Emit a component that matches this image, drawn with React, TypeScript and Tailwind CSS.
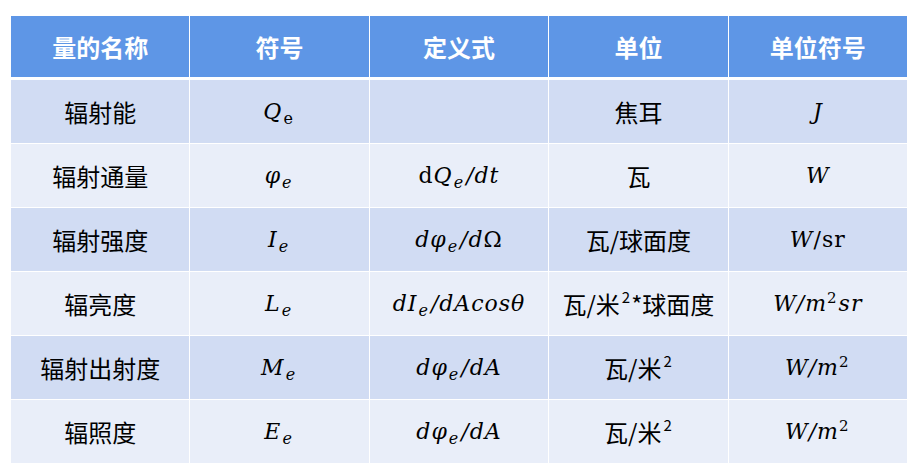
import React from "react";

const cjk = { fontFamily: '"Noto Sans CJK SC", sans-serif' };
const math = { fontFamily: '"DejaVu Serif", "Liberation Serif", serif' };

function I({ children }: { children: React.ReactNode }) {
  return <span className="italic">{children}</span>;
}

function Sub({ children, upright }: { children: React.ReactNode; upright?: boolean }) {
  return (
    <sub className={`text-[16px] ${upright ? "not-italic" : "italic"} bottom-[-5px] ml-[1px] mr-[2px]`}>
      {children}
    </sub>
  );
}

// superscript after a CJK character
function Sup({ children }: { children: React.ReactNode }) {
  return <sup className="text-[15px] not-italic top-[-11px] ml-[2px] mr-[1px]">{children}</sup>;
}

// superscript inside a formula
function MSup({ children }: { children: React.ReactNode }) {
  return <sup className="text-[15px] not-italic top-[-8px] mr-[1px]">{children}</sup>;
}

function M({ children }: { children: React.ReactNode }) {
  return (
    <span className="text-[22px] tracking-[1px] text-black" style={math}>
      {children}
    </span>
  );
}

function C({ children }: { children: React.ReactNode }) {
  return (
    <span className="text-[24px] text-black" style={cjk}>
      {children}
    </span>
  );
}

const headers = ["量的名称", "符号", "定义式", "单位", "单位符号"];

const rows: React.ReactNode[][] = [
  [
    <C>辐射能</C>,
    <M>
      <I>Q</I>
      <Sub upright>e</Sub>
    </M>,
    null,
    <C>焦耳</C>,
    <M>
      <I>J</I>
    </M>,
  ],
  [
    <C>辐射通量</C>,
    <M>
      <I>φ</I>
      <Sub>e</Sub>
    </M>,
    <M>
      d<I>Q</I>
      <Sub>e</Sub>
      <I>/dt</I>
    </M>,
    <C>瓦</C>,
    <M>
      <I>W</I>
    </M>,
  ],
  [
    <C>辐射强度</C>,
    <M>
      <I>I</I>
      <Sub>e</Sub>
    </M>,
    <M>
      <I>dφ</I>
      <Sub>e</Sub>
      <I>/d</I>Ω
    </M>,
    <C>瓦/球面度</C>,
    <M>
      <I>W</I>/sr
    </M>,
  ],
  [
    <C>辐亮度</C>,
    <M>
      <I>L</I>
      <Sub>e</Sub>
    </M>,
    <M>
      <I>dI</I>
      <Sub>e</Sub>
      <I>/dAcosθ</I>
    </M>,
    <C>
      瓦/米<Sup>2</Sup>*球面度
    </C>,
    <M>
      <I>W/m</I>
      <MSup>2</MSup>
      <I>sr</I>
    </M>,
  ],
  [
    <C>辐射出射度</C>,
    <M>
      <I>M</I>
      <Sub>e</Sub>
    </M>,
    <M>
      <I>dφ</I>
      <Sub>e</Sub>
      <I>/dA</I>
    </M>,
    <C>
      瓦/米<Sup>2</Sup>
    </C>,
    <M>
      <I>W/m</I>
      <MSup>2</MSup>
    </M>,
  ],
  [
    <C>辐照度</C>,
    <M>
      <I>E</I>
      <Sub>e</Sub>
    </M>,
    <M>
      <I>dφ</I>
      <Sub>e</Sub>
      <I>/dA</I>
    </M>,
    <C>
      瓦/米<Sup>2</Sup>
    </C>,
    <M>
      <I>W/m</I>
      <MSup>2</MSup>
    </M>,
  ],
];

export default function App() {
  return (
    <div className="w-[917px] h-[467px] bg-white pt-[16px] pl-[11px]">
      <div className="w-[896px] flex flex-col gap-y-[3px]">
        <div className="grid grid-cols-5 gap-x-px h-[61px]">
          {headers.map((h) => (
            <div
              key={h}
              className="bg-[#5e96e6] flex items-center justify-center text-white font-bold text-[24px]"
              style={cjk}
            >
              {h}
            </div>
          ))}
        </div>
        <div className="grid grid-cols-5 gap-px">
          {rows.map((r, ri) =>
            r.map((cell, ci) => (
              <div
                key={`${ri}-${ci}`}
                className={`h-[63px] flex items-center justify-center ${
                  ri % 2 === 0 ? "bg-[#d1dcf3]" : "bg-[#e9eef9]"
                }`}
              >
                {cell}
              </div>
            ))
          )}
        </div>
      </div>
    </div>
  );
}
